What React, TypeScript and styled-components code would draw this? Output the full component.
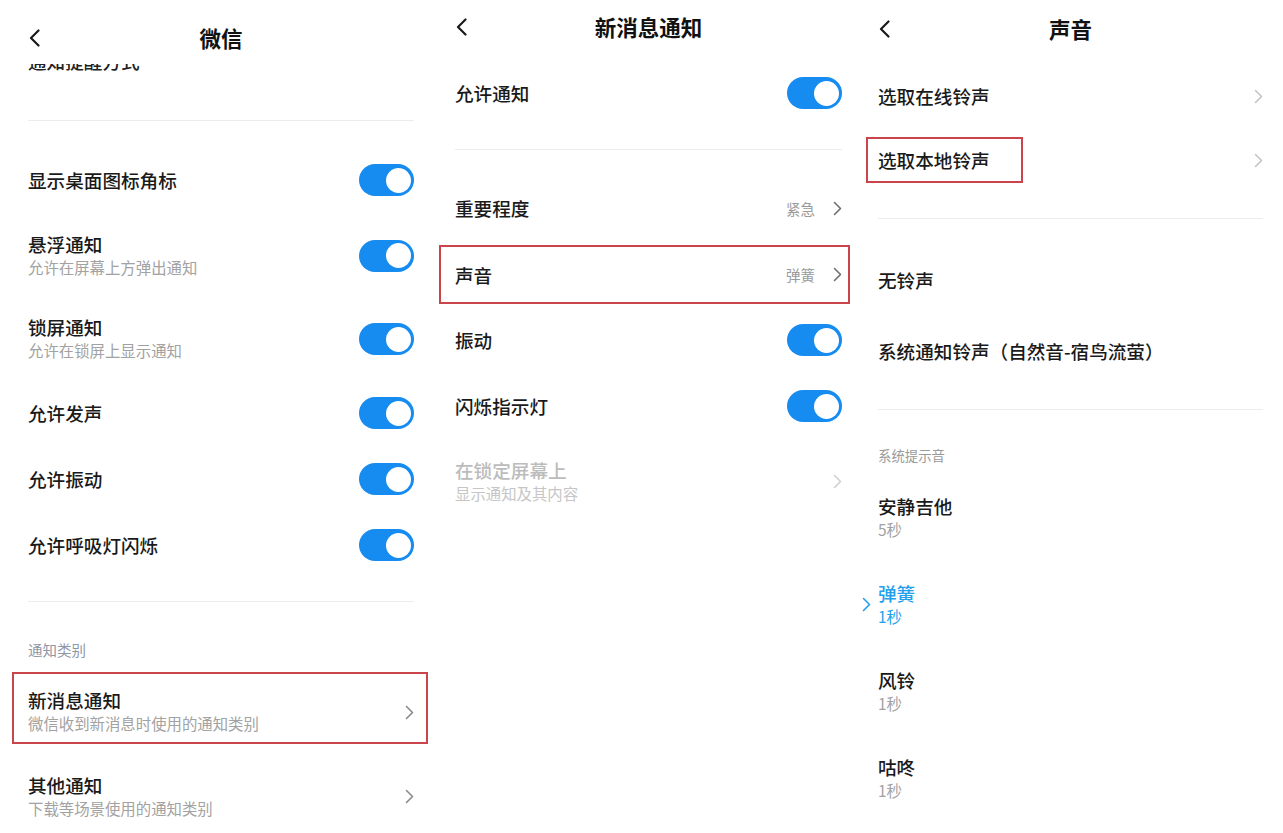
import React from "react";
import styled, { createGlobalStyle } from "styled-components";

const Global = createGlobalStyle`
  html, body { margin: 0; padding: 0; background: #ffffff; }
  body {
    font-family: "Noto Sans CJK SC", "Noto Sans", sans-serif;
    color: #1c1c1c;
    -webkit-font-smoothing: antialiased;
  }
`;

const Page = styled.div`
  display: flex;
  width: 1283px;
  height: 833px;
  overflow: hidden;
  background: #fff;
`;

const Screen = styled.section<{ $w: number; $pl: number; $pr: number }>`
  width: ${(p) => p.$w}px;
  flex: none;
  box-sizing: border-box;
  padding: 0 ${(p) => p.$pr}px 0 ${(p) => p.$pl}px;
  display: flex;
  flex-direction: column;
  overflow: hidden;
`;

const Header = styled.header<{ $top: number }>`
  display: grid;
  grid-template-columns: 40px 1fr 40px;
  align-items: center;
  height: 30px;
  margin-top: ${(p) => p.$top}px;
  flex: none;
`;

const BackBtn = styled.span`
  display: flex;
  align-items: center;
  height: 30px;
`;

const Title = styled.h1`
  margin: 0;
  text-align: center;
  font-size: 21.5px;
  line-height: 30px;
  font-weight: 700;
  color: #111;
`;

const Divider = styled.hr<{ $mt: number }>`
  flex: none;
  margin: ${(p) => p.$mt}px 0 0 0;
  border: 0;
  height: 1px;
  background: #ececec;
`;

const Clipped = styled.div<{ $mt: number }>`
  flex: none;
  margin-top: ${(p) => p.$mt}px;
  height: 9px;
  overflow: hidden;
`;

const ClippedText = styled.div`
  margin-top: -14px;
  font-size: 18.6px;
  line-height: 22px;
  font-weight: 500;
  color: #222;
  white-space: nowrap;
`;

const Row = styled.div<{ $h: number; $mt?: number; $pt?: number }>`
  flex: none;
  display: flex;
  align-items: center;
  gap: 12px;
  height: ${(p) => p.$h}px;
  margin-top: ${(p) => p.$mt ?? 0}px;
  padding-top: ${(p) => p.$pt ?? 0}px;
  box-sizing: border-box;
`;

const TextBlock = styled.div`
  flex: 1;
  min-width: 0;
  display: flex;
  flex-direction: column;
`;

const Label = styled.div<{ $tone?: "normal" | "disabled" | "active" }>`
  font-size: 18.6px;
  line-height: 22px;
  font-weight: 500;
  white-space: nowrap;
  color: ${(p) =>
    p.$tone === "disabled" ? "#bcbcbc" : p.$tone === "active" ? "#23a0ec" : "#1a1a1a"};
`;

const Sub = styled.div<{ $tone?: "normal" | "disabled" | "active" }>`
  font-size: 15.4px;
  line-height: 24px;
  white-space: nowrap;
  color: ${(p) =>
    p.$tone === "disabled" ? "#c6c6c6" : p.$tone === "active" ? "#23a0ec" : "#a2a2a2"};
`;

const Value = styled.span`
  font-size: 14.5px;
  color: #9a9a9a;
  margin-right: 6px;
`;

const SectionLabel = styled.div<{ $mt: number; $size: number; $color: string }>`
  flex: none;
  margin-top: ${(p) => p.$mt}px;
  height: 20px;
  line-height: 20px;
  font-size: ${(p) => p.$size}px;
  color: ${(p) => p.$color};
`;

const Toggle = styled.span`
  flex: none;
  display: flex;
  justify-content: flex-end;
  align-items: center;
  box-sizing: border-box;
  width: 55px;
  height: 32px;
  padding: 0 3px;
  border-radius: 16px;
  background: #168cf0;
`;

const Knob = styled.span`
  width: 25px;
  height: 25px;
  border-radius: 50%;
  background: #fff;
`;

const RowHighlight = styled.div<{ $ml: number; $mr: number; $mt: number; $h: number }>`
  flex: none;
  box-sizing: border-box;
  height: ${(p) => p.$h}px;
  margin: ${(p) => p.$mt}px ${(p) => -p.$mr}px 0 ${(p) => -p.$ml}px;
  padding: 0 ${(p) => p.$mr - 2}px 0 ${(p) => p.$ml - 2}px;
  border: 2px solid #c9444b;
  display: flex;
  flex-direction: column;
`;

const TextHighlight = styled.div`
  flex: none;
  box-sizing: border-box;
  width: 157px;
  height: 46px;
  margin-left: -12px;
  padding-left: 10px;
  border: 2px solid #c9444b;
  display: flex;
  align-items: center;
`;

const Spring = styled.div`
  flex: 1;
`;

const Marker = styled.span`
  flex: none;
  width: 16px;
  margin-left: -16px;
  margin-right: -12px;
  display: flex;
  align-items: center;
`;

const Back = () => (
  <BackBtn>
    <svg width="13" height="18" viewBox="0 0 13 18" fill="none">
      <path d="M10.5 1.5 L3 9 L10.5 16.5" stroke="#1a1a1a" strokeWidth="2.2" strokeLinecap="round" strokeLinejoin="round" />
    </svg>
  </BackBtn>
);

const Chevron = ({ color = "#8a8a8a" }: { color?: string }) => (
  <svg width="9" height="15" viewBox="0 0 9 15" fill="none" style={{ flex: "none" }}>
    <path d="M1.5 1.5 L7.5 7.5 L1.5 13.5" stroke={color} strokeWidth="1.6" strokeLinecap="round" strokeLinejoin="round" />
  </svg>
);

const Switch = () => (
  <Toggle>
    <Knob />
  </Toggle>
);

export default function App() {
  return (
    <>
      <Global />
      <Page>
        {/* Screen 1 */}
        <Screen $w={428} $pl={28} $pr={14}>
          <Header $top={23}>
            <Back />
            <Title>微信</Title>
            <span />
          </Header>
          <Clipped $mt={11}>
            <ClippedText>通知提醒方式</ClippedText>
          </Clipped>
          <Divider $mt={47} />
          <Row $h={66} $mt={26}>
            <TextBlock>
              <Label>显示桌面图标角标</Label>
            </TextBlock>
            <Switch />
          </Row>
          <Row $h={85}>
            <TextBlock>
              <Label>悬浮通知</Label>
              <Sub>允许在屏幕上方弹出通知</Sub>
            </TextBlock>
            <Switch />
          </Row>
          <Row $h={82}>
            <TextBlock>
              <Label>锁屏通知</Label>
              <Sub>允许在锁屏上显示通知</Sub>
            </TextBlock>
            <Switch />
          </Row>
          <Row $h={66}>
            <TextBlock>
              <Label>允许发声</Label>
            </TextBlock>
            <Switch />
          </Row>
          <Row $h={66}>
            <TextBlock>
              <Label>允许振动</Label>
            </TextBlock>
            <Switch />
          </Row>
          <Row $h={66}>
            <TextBlock>
              <Label>允许呼吸灯闪烁</Label>
            </TextBlock>
            <Switch />
          </Row>
          <Divider $mt={23} />
          <SectionLabel $mt={38} $size={14.5} $color="#8e96a8">
            通知类别
          </SectionLabel>
          <RowHighlight $ml={16} $mr={14} $mt={12} $h={72}>
            <Row $h={68} $pt={8}>
              <TextBlock>
                <Label>新消息通知</Label>
                <Sub>微信收到新消息时使用的通知类别</Sub>
              </TextBlock>
              <Chevron />
            </Row>
          </RowHighlight>
          <Row $h={105}>
            <TextBlock>
              <Label>其他通知</Label>
              <Sub>下载等场景使用的通知类别</Sub>
            </TextBlock>
            <Chevron />
          </Row>
        </Screen>

        {/* Screen 2 */}
        <Screen $w={427} $pl={27} $pr={13}>
          <Header $top={12}>
            <Back />
            <Title>新消息通知</Title>
            <span />
          </Header>
          <Row $h={66} $mt={18}>
            <TextBlock>
              <Label>允许通知</Label>
            </TextBlock>
            <Switch />
          </Row>
          <Divider $mt={23} />
          <Row $h={66} $mt={25}>
            <TextBlock>
              <Label>重要程度</Label>
            </TextBlock>
            <Value>紧急</Value>
            <Chevron color="#6f6f6f" />
          </Row>
          <RowHighlight $ml={16} $mr={8} $mt={4} $h={59}>
            <Row $h={55}>
              <TextBlock>
                <Label>声音</Label>
              </TextBlock>
              <Value>弹簧</Value>
              <Chevron color="#6f6f6f" />
            </Row>
          </RowHighlight>
          <Row $h={66} $mt={3}>
            <TextBlock>
              <Label>振动</Label>
            </TextBlock>
            <Switch />
          </Row>
          <Row $h={66}>
            <TextBlock>
              <Label>闪烁指示灯</Label>
            </TextBlock>
            <Switch />
          </Row>
          <Row $h={85}>
            <TextBlock>
              <Label $tone="disabled">在锁定屏幕上</Label>
              <Sub $tone="disabled">显示通知及其内容</Sub>
            </TextBlock>
            <Chevron color="#cfcfcf" />
          </Row>
        </Screen>

        {/* Screen 3 */}
        <Screen $w={428} $pl={23} $pr={20}>
          <Header $top={14}>
            <Back />
            <Title>声音</Title>
            <span />
          </Header>
          <Row $h={66} $mt={19}>
            <TextBlock>
              <Label>选取在线铃声</Label>
            </TextBlock>
            <Chevron color="#c4c4c4" />
          </Row>
          <Row $h={62}>
            <TextHighlight>
              <Label>选取本地铃声</Label>
            </TextHighlight>
            <Spring />
            <Chevron color="#c4c4c4" />
          </Row>
          <Divider $mt={27} />
          <Row $h={70} $mt={26}>
            <TextBlock>
              <Label>无铃声</Label>
            </TextBlock>
          </Row>
          <Row $h={72}>
            <TextBlock>
              <Label>系统通知铃声（自然音-宿鸟流萤）</Label>
            </TextBlock>
          </Row>
          <Divider $mt={22} />
          <SectionLabel $mt={35} $size={13.4} $color="#9a9a9a">
            系统提示音
          </SectionLabel>
          <Row $h={87} $mt={9}>
            <TextBlock>
              <Label>安静吉他</Label>
              <Sub>5秒</Sub>
            </TextBlock>
          </Row>
          <Row $h={87}>
            <Marker>
              <Chevron color="#23a0ec" />
            </Marker>
            <TextBlock>
              <Label $tone="active">弹簧</Label>
              <Sub $tone="active">1秒</Sub>
            </TextBlock>
          </Row>
          <Row $h={87}>
            <TextBlock>
              <Label>风铃</Label>
              <Sub>1秒</Sub>
            </TextBlock>
          </Row>
          <Row $h={87}>
            <TextBlock>
              <Label>咕咚</Label>
              <Sub>1秒</Sub>
            </TextBlock>
          </Row>
        </Screen>
      </Page>
    </>
  );
}
